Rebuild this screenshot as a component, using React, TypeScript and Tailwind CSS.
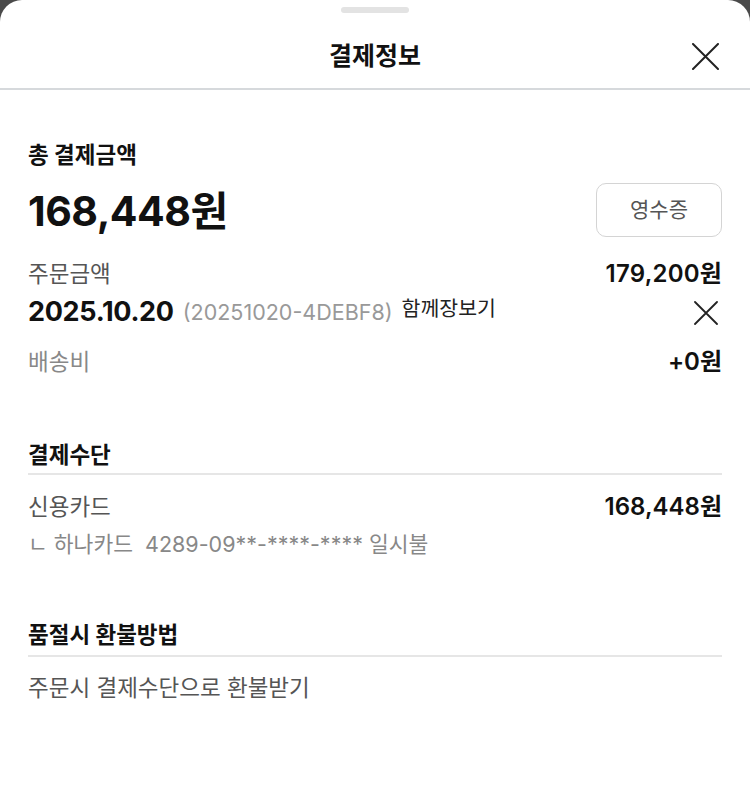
const font = { fontFamily: 'Inter, "Noto Sans CJK KR", sans-serif' };

function Cross({ size, stroke }: { size: number; stroke: number }) {
  return (
    <svg width={size} height={size} viewBox={`0 0 ${size} ${size}`} fill="none" stroke="currentColor" strokeWidth={stroke} strokeLinecap="round">
      <path d={`M1 1L${size - 1} ${size - 1}M${size - 1} 1L1 ${size - 1}`} />
    </svg>
  );
}

function Row({ left, right }: { left: React.ReactNode; right: React.ReactNode }) {
  return (
    <div className="flex items-center justify-between">
      {left}
      {right}
    </div>
  );
}

export default function App() {
  return (
    <div className="w-[750px] h-[810px] bg-[#4a4a4a]" style={font}>
      <div className="h-full bg-white rounded-t-[22px] flex flex-col">
        <div className="flex justify-center pt-[7px]">
          <div className="w-[68px] h-[6px] rounded-full bg-[#e3e3e3]" />
        </div>
        <header className="relative h-[77px] flex items-center justify-center border-b-2 border-[#d6d9dc]">
          <h1 className="text-[25px] font-bold text-[#111] mt-[13px]">결제정보</h1>
          <button className="absolute right-[31px] top-[30px] text-[#222]">
            <Cross size={27} stroke={2} />
          </button>
        </header>

        <main className="px-[28px] pt-[50px]">
          <section>
            <h2 className="text-[22.5px] font-bold text-[#111] leading-[30px]">총 결제금액</h2>
            <div className="flex items-center justify-between mt-[12px]">
              <p className="text-[41px] font-bold text-[#111] leading-[54px] tracking-[-0.5px] mt-[2px]">168,448원</p>
              <button className="w-[126px] h-[54px] rounded-[10px] border border-[#d4d4d4] text-[21px] text-[#555]">
                영수증
              </button>
            </div>

            <div className="mt-[20px]">
              <Row
                left={<span className="text-[22.5px] text-[#555] leading-[32px]">주문금액</span>}
                right={<span className="text-[24px] font-semibold text-[#111] leading-[32px] tracking-[0.2px]">179,200원</span>}
              />
              <div className="flex items-center justify-between mt-[4px]">
                <div className="flex items-center gap-[9px]">
                  <span className="text-[27px] font-bold text-[#111] leading-[36px] tracking-[-0.3px]">2025.10.20</span>
                  <span className="text-[21.5px] text-[#999] leading-[36px]">(20251020-4DEBF8)</span>
                  <span className="text-[20.5px] text-[#222] leading-[36px] -mt-[6px]">함께장보기</span>
                </div>
                <span className="text-[#222] mt-[2px] mr-[4px]">
                  <Cross size={24} stroke={1.8} />
                </span>
              </div>
              <div className="mt-[16px]">
                <Row
                  left={<span className="text-[22.5px] text-[#888] leading-[32px]">배송비</span>}
                  right={<span className="text-[24px] font-semibold text-[#111] leading-[32px]">+0원</span>}
                />
              </div>
            </div>
          </section>

          <section className="mt-[62px]">
            <h2 className="text-[22.5px] font-bold text-[#111] leading-[30px] pb-[3px] border-b-2 border-[#e6e6e6]">
              결제수단
            </h2>
            <div className="mt-[16px]">
              <Row
                left={<span className="text-[22.5px] text-[#555] leading-[32px]">신용카드</span>}
                right={<span className="text-[24px] font-semibold text-[#111] leading-[32px]">168,448원</span>}
              />
              <p className="text-[21.5px] text-[#888] leading-[32px] mt-[5px]">
                ㄴ 하나카드&nbsp;&nbsp;4289-09**-****-**** 일시불
              </p>
            </div>
          </section>

          <section className="mt-[60px]">
            <h2 className="text-[22.5px] font-bold text-[#111] leading-[30px] pb-[5px] border-b-2 border-[#e6e6e6]">
              품절시 환불방법
            </h2>
            <p className="text-[22.5px] text-[#555] leading-[32px] mt-[15px]">주문시 결제수단으로 환불받기</p>
          </section>
        </main>
      </div>
    </div>
  );
}
